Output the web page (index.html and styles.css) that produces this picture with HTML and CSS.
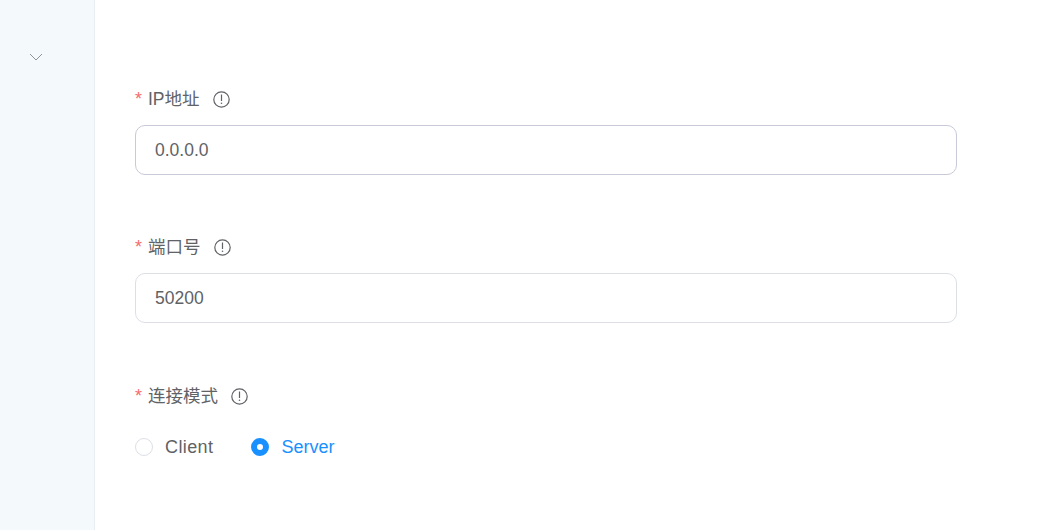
FILE: index.html
```html
<!DOCTYPE html>
<html lang="zh-CN">
<head>
    <meta charset="UTF-8">
    <meta name="viewport" content="width=device-width, initial-scale=1.0">
    <title>连接设置</title>
    <link rel="stylesheet" href="styles.css">
</head>
<body>
    <div class="layout">
        <div class="sidebar">
            <svg class="chevron" width="14" height="8" viewBox="0 0 14 8" fill="none" xmlns="http://www.w3.org/2000/svg">
                <path d="M1 1L7 7L13 1" stroke="currentColor" stroke-width="1"/>
            </svg>
        </div>
        <form class="main">
            <div class="form-item">
                <div class="form-label">
                    <span class="required">*</span>
                    <span class="label-text">IP地址</span>
                    <svg class="info" width="17" height="17" viewBox="0 0 17 17" fill="none" xmlns="http://www.w3.org/2000/svg">
                        <circle cx="8.5" cy="8.5" r="7.7" stroke="currentColor" stroke-width="1.2"/>
                        <path d="M8.5 3.5V10" stroke="currentColor" stroke-width="1.2"/>
                        <circle cx="8.5" cy="12.3" r="0.8" fill="currentColor"/>
                    </svg>
                </div>
                <div class="input-box input-hover">0.0.0.0</div>
            </div>
            <div class="form-item">
                <div class="form-label">
                    <span class="required">*</span>
                    <span class="label-text">端口号</span>
                    <svg class="info" width="17" height="17" viewBox="0 0 17 17" fill="none" xmlns="http://www.w3.org/2000/svg">
                        <circle cx="8.5" cy="8.5" r="7.7" stroke="currentColor" stroke-width="1.2"/>
                        <path d="M8.5 3.5V10" stroke="currentColor" stroke-width="1.2"/>
                        <circle cx="8.5" cy="12.3" r="0.8" fill="currentColor"/>
                    </svg>
                </div>
                <div class="input-box">50200</div>
            </div>
            <div class="form-item form-item-radio">
                <div class="form-label">
                    <span class="required">*</span>
                    <span class="label-text">连接模式</span>
                    <svg class="info" width="17" height="17" viewBox="0 0 17 17" fill="none" xmlns="http://www.w3.org/2000/svg">
                        <circle cx="8.5" cy="8.5" r="7.7" stroke="currentColor" stroke-width="1.2"/>
                        <path d="M8.5 3.5V10" stroke="currentColor" stroke-width="1.2"/>
                        <circle cx="8.5" cy="12.3" r="0.8" fill="currentColor"/>
                    </svg>
                </div>
                <div class="radio-group">
                    <div class="radio client">
                        <span class="radio-dot"></span>
                        Client
                    </div>
                    <div class="radio checked">
                        <span class="radio-dot"></span>
                        Server
                    </div>
                </div>
            </div>
        </form>
    </div>
</body>
</html>
```

FILE: styles.css
```css
* {
    margin: 0;
    padding: 0;
    box-sizing: border-box;
}

body {
    background: #ffffff;
    color: #606266;
    font-family: "Liberation Sans", "Noto Sans CJK SC", sans-serif;
    font-size: 17.5px;
    overflow: hidden;
}

.layout {
    display: flex;
    height: 530px;
}

.sidebar {
    width: 95px;
    flex-shrink: 0;
    background: #f4f9fc;
    border-right: 1px solid #e9eef3;
    padding: 53px 0 0 29px;
}

.chevron {
    display: block;
    color: #909399;
}

.main {
    flex: 1;
    padding: 87px 88px 0 40px;
}

.form-item {
    margin-bottom: 60px;
}

.form-item-radio {
    padding-top: 1px;
}

.form-label {
    display: flex;
    align-items: center;
    height: 24px;
    margin-bottom: 14px;
    line-height: 24px;
}

.required {
    color: #f56c6c;
    width: 13px;
    font-size: 18px;
}

.label-text {
    color: #606266;
}

.info {
    margin-left: 13px;
    color: #606266;
}

.input-box {
    height: 50px;
    line-height: 48px;
    border: 1px solid #dcdfe6;
    border-radius: 10px;
    padding: 0 19px;
    color: #606266;
}

.input-hover {
    border-color: #c8c9d9;
}

.radio-group {
    display: flex;
    gap: 38px;
    padding-top: 13px;
    font-size: 18px;
}

.radio {
    display: flex;
    align-items: center;
    gap: 12px;
    line-height: 24px;
}

.radio.client {
    letter-spacing: 0.4px;
}

.radio-dot {
    width: 18px;
    height: 18px;
    border-radius: 50%;
    border: 1px solid #dcdfe6;
    background: #ffffff;
}

.radio.checked {
    color: #1890ff;
}

.radio.checked .radio-dot {
    border: 6px solid #1890ff;
}
```
